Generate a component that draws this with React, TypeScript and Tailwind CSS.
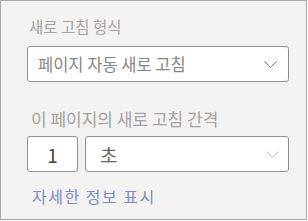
import React from 'react';

const Chevron: React.FC<{ className?: string }> = ({ className = '' }) => (
  <svg className={className} width="13" height="7" viewBox="0 0 13 7" fill="none">
    <path d="M0.5 0.5 L6.5 6.5 L12.5 0.5" stroke="currentColor" strokeWidth="1" />
  </svg>
);

const App: React.FC = () => {
  return (
    <div
      className="w-[307px] h-[220px] border border-[#a8a8a8] bg-[#f3f2f1] pl-[26px] pt-[14px]"
      style={{ fontFamily: '"Noto Sans CJK KR", "Noto Sans", sans-serif' }}
    >
      {/* Refresh type */}
      <div className="text-[15.5px] leading-[22px] text-[#a2a2a2] pl-[2px]">새로 고침 형식</div>
      <div className="mt-[9px] w-[262px] h-[36px] bg-white border border-[#8f8f8f] rounded-[3px] flex items-center justify-between pl-[10px] pr-[11px]">
        <span className="text-[16.5px] leading-none text-[#858585]">페이지 자동 새로 고침</span>
        <Chevron className="text-[#8a8a8a]" />
      </div>

      {/* Interval */}
      <div className="mt-[26px] text-[17px] leading-[22px] text-[#a2a2a2] pl-[4px]">
        이 페이지의 새로 고침 간격
      </div>
      <div className="mt-[6px] flex gap-[7px]">
        <div className="w-[51px] h-[36px] bg-white border border-[#8f8f8f] rounded-[3px] flex items-center justify-center text-[19px] leading-none text-[#444]">
          1
        </div>
        <div className="w-[204px] h-[36px] bg-white border border-[#8f8f8f] rounded-[3px] flex items-center justify-between pl-[14px] pr-[9px]">
          <span className="text-[19px] leading-none text-[#666]">초</span>
          <Chevron className="text-[#c4c4c4]" />
        </div>
      </div>
      <div className="mt-[13px] text-[16px] leading-[22px] text-[#7b8bc9] pl-[5px] tracking-[1.5px]">
        자세한 정보 표시
      </div>
    </div>
  );
};

export default App;
